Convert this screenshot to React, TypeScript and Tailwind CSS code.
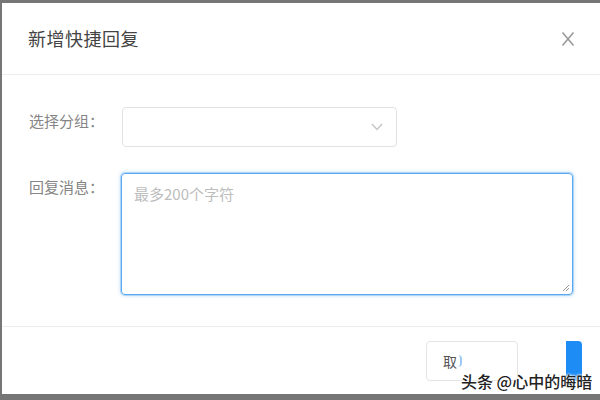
const cjk = { fontFamily: '"Noto Sans CJK SC", "Noto Sans", sans-serif' };

function Chevron() {
  return (
    <svg width="12" height="8" viewBox="0 0 12 8" fill="none">
      <path d="M1 1l5 5.5L11 1" stroke="#c4c4c4" strokeWidth="1.3" />
    </svg>
  );
}

function CloseX() {
  return (
    <svg width="14" height="16" viewBox="0 0 14 16" fill="none">
      <path d="M1.5 1.5l11 13M12.5 1.5l-11 13" stroke="#9a9a9a" strokeWidth="1.6" />
    </svg>
  );
}

export default function App() {
  return (
    <div
      className="relative w-[600px] h-[400px] flex flex-col bg-[#767676] pt-[3px] pl-[2px] pb-[6px] overflow-hidden"
      style={cjk}
    >
      <div className="flex-1 flex flex-col bg-white">
        {/* Header */}
        <div className="h-[72px] flex items-center justify-between pl-[26px] pr-[25px] border-b border-[#ececec]">
          <span className="text-[18px] tracking-[0.5px] text-[#444]">新增快捷回复</span>
          <CloseX />
        </div>

        {/* Body */}
        <div className="h-[252px] flex flex-col gap-[26px] pt-[32px] pl-[27px] pr-[27px] border-b border-[#ececec]">
          <div className="flex items-start">
            <span className="w-[93px] leading-[28px] text-[15px] text-[#858585]">选择分组：</span>
            <div className="w-[275px] h-[40px] flex items-center justify-end pr-[13px] border border-[#e2e2e2] rounded-[4px]">
              <Chevron />
            </div>
          </div>
          <div className="flex items-start">
            <span className="w-[92px] leading-[28px] text-[15px] text-[#858585]">回复消息：</span>
            <div className="relative flex-1 h-[122px] border border-[#5aa8ef] rounded-[4px] shadow-[0_0_0_1px_rgba(90,168,239,0.35),0_0_4px_rgba(90,168,239,0.5)] px-[12px] pt-[7px]">
              <span className="leading-[22px] text-[15px] text-[#bdbdbd]">最多200个字符</span>
              <svg className="absolute right-[2px] bottom-[2px]" width="8" height="8" viewBox="0 0 8 8">
                <path d="M7 1L1 7M7 4L4 7" stroke="#9a9a9a" strokeWidth="1" />
              </svg>
            </div>
          </div>
        </div>

        {/* Footer */}
        <div className="flex-1 flex items-start pt-[14px] pl-[424px] gap-[48px]">
          <div className="w-[92px] h-[40px] flex items-center pl-[16px] border border-[#e4e4e4] rounded-[4px]">
            <span className="text-[14px] text-[#555]">取</span>
            <span className="ml-[1px] w-[4px] h-[12px] rounded-r-full border-r-2 border-[#9cc8f5]" />
          </div>
          <div className="w-[16px] h-[40px] bg-[#1e8cf5] rounded-r-[4px]" />
        </div>
      </div>

      {/* watermark */}
      <div
        className="absolute left-[461px] top-[370px] text-[16px] leading-[22px] font-medium text-[#222] [text-shadow:0_0_2px_#fff,0_0_2px_#fff,0_0_3px_#fff]"
        style={cjk}
      >
        头条 @心中的晦暗
      </div>
    </div>
  );
}
